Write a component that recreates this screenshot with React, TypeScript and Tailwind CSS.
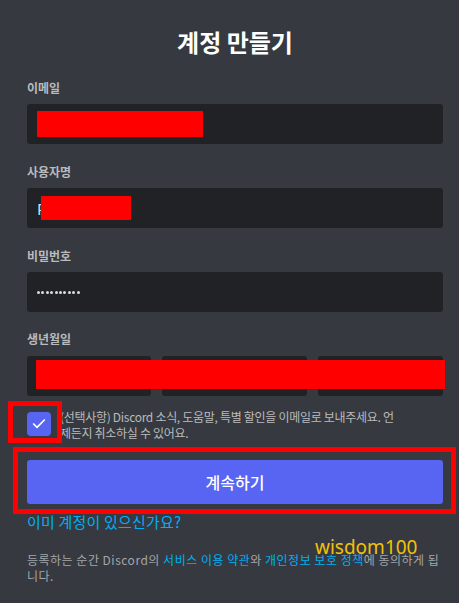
import { Check } from 'lucide-react';

const font = { fontFamily: '"Noto Sans CJK KR", "Noto Sans", sans-serif' };

function Label({ children, className = '' }: { children: React.ReactNode; className?: string }) {
  return (
    <div className={`h-4 text-[12px] font-bold leading-4 text-[#b9bbbe] ${className}`}>{children}</div>
  );
}

export default function App() {
  return (
    <div style={font} className="relative min-h-[603px] w-[459px] overflow-hidden bg-[#36393f] pl-[27px] pr-[16px] pt-[27px]">
      <h1 className="text-center text-[24px] font-bold leading-[30px] text-white">계정 만들기</h1>

      {/* 이메일 */}
      <Label className="mt-[23px]">이메일</Label>
      <div className="mt-2 flex h-10 items-center rounded-[3px] bg-[#202225] pl-[10px]">
        <div className="h-[26px] w-[166px] bg-[#ff0000]" />
      </div>

      {/* 사용자명 */}
      <Label className="mt-5">사용자명</Label>
      <div className="mt-2 flex h-10 items-center rounded-[3px] bg-[#202225] pl-[10px]">
        <span className="text-[15px] leading-none text-[#dcddde]">P</span>
        <div className="relative -ml-[6px] h-[24px] w-[90px] bg-[#ff0000]" />
      </div>

      {/* 비밀번호 */}
      <Label className="mt-5">비밀번호</Label>
      <div className="mt-2 flex h-10 items-center gap-[1.4px] rounded-[3px] bg-[#202225] pl-[10px]">
        {Array.from({ length: 10 }).map((_, i) => (
          <span key={i} className="h-[3px] w-[3px] rounded-full bg-[#dcddde]" />
        ))}
      </div>

      {/* 생년월일 */}
      <Label className="mt-[19px]">생년월일</Label>
      <div className="relative mt-[9px] grid h-10 grid-cols-[124fr_145fr_125fr] gap-[11px]">
        <div className="rounded-[3px] bg-[#202225]" />
        <div className="rounded-[3px] bg-[#202225]" />
        <div className="rounded-[3px] bg-[#202225]" />
        <div className="absolute left-[9px] right-[-2px] top-[4px] h-[29px] bg-[#ff0000]" />
      </div>

      {/* 수신 동의 */}
      <div className="mt-[13px] flex gap-[9px]">
        <div className="relative mt-[3px] shrink-0">
          <div className="flex h-6 w-6 items-center justify-center rounded-[4px] bg-[#5865f2]">
            <Check size={16} strokeWidth={2.5} className="text-white" />
          </div>
          <div className="absolute -left-[19px] -top-[11px] h-[42px] w-[54px] border-[5px] border-[#ff0000]" />
        </div>
        <p className="text-[12px] leading-4 tracking-[-0.3px] text-[#b9bbbe]">
          (선택사항) Discord 소식, 도움말, 특별 할인을 이메일로 보내주세요. 언
          <br />
          제든지 취소하실 수 있어요.
        </p>
      </div>

      {/* 계속하기 */}
      <div className="relative mt-[19px]">
        <button className="flex h-11 w-full items-center justify-center rounded-[3px] bg-[#5865f2] text-[16px] font-medium text-white">
          계속하기
        </button>
        <div className="absolute -left-[14px] -right-[13px] -top-[13px] -bottom-[10px] border-[5px] border-[#ff0000]" />
      </div>

      <div className="mt-[10px] text-[15px] leading-4 tracking-[0.2px] text-[#00aff4]">이미 계정이 있으신가요?</div>

      <p className="mt-[22px] text-[12px] leading-4 tracking-[0.5px] text-[#a3a6aa]">
        등록하는 순간 Discord의 <span className="text-[#00aff4]">서비스 이용 약관</span>와{' '}
        <span className="text-[#00aff4]">개인정보 보호 정책</span>에 동의하게 됩
        <br />
        니다.
      </p>

      <span
        style={{ fontFamily: '"Noto Sans", sans-serif' }}
        className="absolute left-[315px] top-[535px] text-[19px] leading-6 text-[#f2c20a]"
      >
        wisdom100
      </span>
    </div>
  );
}
